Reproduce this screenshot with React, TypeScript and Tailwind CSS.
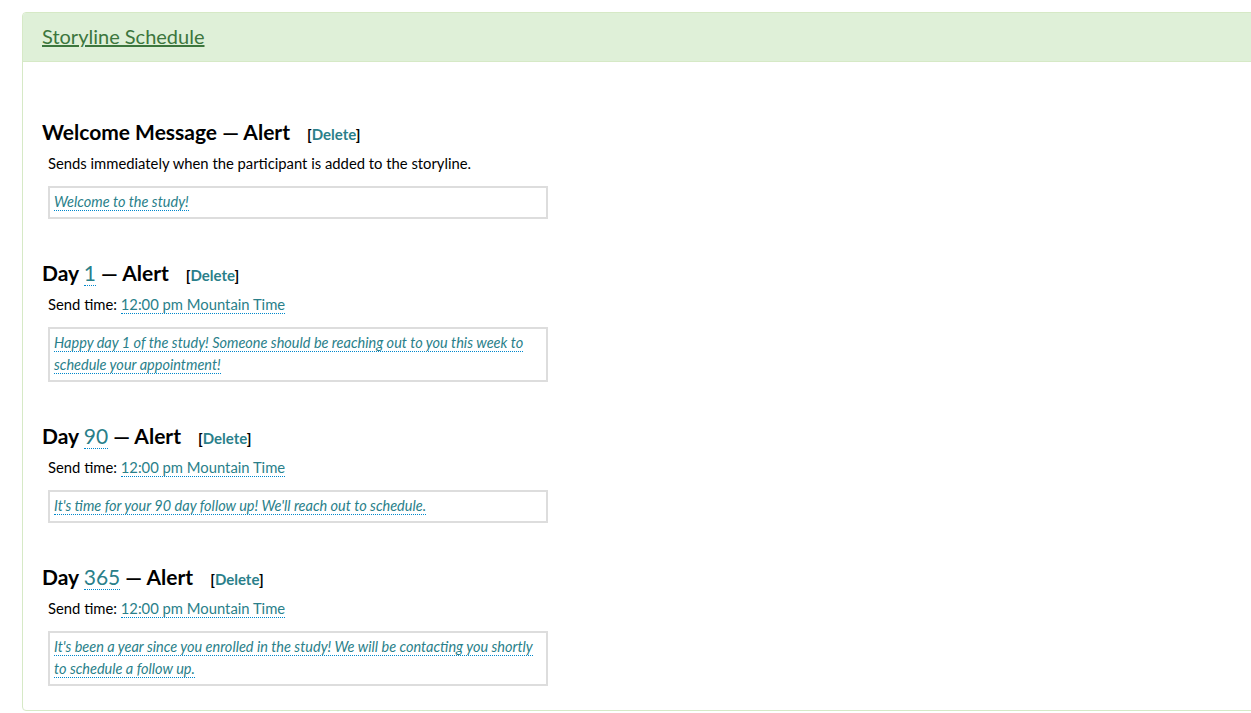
const font = { fontFamily: 'Lato, "Noto Sans", sans-serif' };

type Alert = {
  day: string;
  text: string;
};

const alerts: Alert[] = [
  { day: '1', text: 'Happy day 1 of the study! Someone should be reaching out to you this week to schedule your appointment!' },
  { day: '90', text: "It's time for your 90 day follow up! We'll reach out to schedule." },
  { day: '365', text: "It's been a year since you enrolled in the study! We will be contacting you shortly to schedule a follow up." },
];

function Editable({ children, className = '' }: { children: React.ReactNode; className?: string }) {
  return (
    <a href="#" className={`text-[#2a7f8a] border-b border-dotted border-[#0088cc] no-underline ${className}`}>
      {children}
    </a>
  );
}

function DeleteLink() {
  return (
    <span className="ml-[17px] text-[15px] font-bold text-black">
      [<a href="#" className="text-[#2a7f8a]">Delete</a>]
    </span>
  );
}

function MessageBox({ text }: { text: string }) {
  return (
    <div className="mt-[13px] ml-[6px] w-[500px] border-2 border-[#dddddd] px-[4px] pt-[3px] pb-[4px] text-[14.5px] leading-[22px] italic">
      <Editable>{text}</Editable>
    </div>
  );
}

export default function App() {
  return (
    <div className="min-h-screen bg-white overflow-hidden pt-[12px]" style={font}>
      <div className="ml-[22px] mr-[-12px] rounded-[4px] border border-[#d6e9c6] bg-white">
        {/* Heading */}
        <div className="bg-[#dff0d8] border-b border-[#d6e9c6] px-[19px] pt-[9px] pb-[11px] rounded-t-[3px]">
          <a href="#" className="text-[20px] leading-[28px] text-[#3c763d] underline">
            Storyline Schedule
          </a>
        </div>

        {/* Body */}
        <div className="px-[19px] pt-[56px] pb-[24px] text-black">
          <h2 className="text-[21px] leading-[28px] font-bold flex items-baseline">
            <span>Welcome Message — Alert</span>
            <DeleteLink />
          </h2>
          <p className="mt-[5px] ml-[6px] text-[14.8px] leading-[20px]">
            Sends immediately when the participant is added to the storyline.
          </p>
          <MessageBox text="Welcome to the study!" />

          {alerts.map((a) => (
            <div key={a.day} className="mt-[40px]">
              <h2 className="text-[21px] leading-[28px] font-bold flex items-baseline">
                <span>
                  Day <Editable className="font-normal">{a.day}</Editable> — Alert
                </span>
                <DeleteLink />
              </h2>
              <p className="mt-[5px] ml-[6px] text-[14.8px] leading-[20px]">
                Send time: <Editable>12:00 pm Mountain Time</Editable>
              </p>
              <MessageBox text={a.text} />
            </div>
          ))}
        </div>
      </div>
    </div>
  );
}
